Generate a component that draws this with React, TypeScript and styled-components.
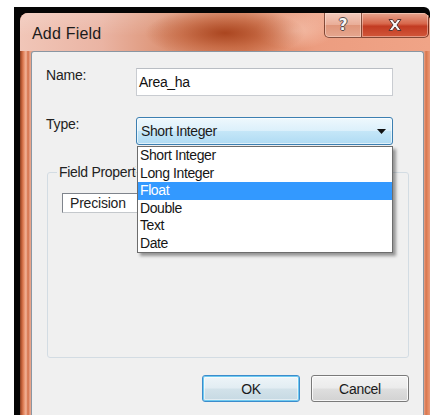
import React from "react";
import styled, { createGlobalStyle } from "styled-components";

const Global = createGlobalStyle`
  html, body { margin: 0; padding: 0; background: #ffffff; }
  body { font-family: "Liberation Sans", Arial, sans-serif; color: #1e1e1e; }
  * { box-sizing: border-box; }
`;

const Page = styled.div`
  width: 432px;
  height: 415px;
  overflow: hidden;
  background: #ffffff;
  padding: 7px 3px 0 14px;
  display: flex;
`;

const Backdrop = styled.div`
  flex: 1;
  display: flex;
  background: #050505;
  padding: 6px 0 0 6px;
  border-radius: 0 6px 0 0;
`;

const Window = styled.div`
  flex: 1;
  display: flex;
  flex-direction: column;
  border-radius: 8px 8px 0 0;
  overflow: hidden;
  background: linear-gradient(
    90deg,
    #8a3f22 0px,
    #c9643c 2px,
    #e88e68 4px,
    #f2b49a 6px,
    #d36e47 8px,
    #e9a48a 10px,
    #e9a48a calc(100% - 6px),
    #d8744c calc(100% - 4px),
    #e48a62 calc(100% - 2px),
    #e9977a 100%
  );
`;

const TitleBar = styled.div`
  height: 38px;
  display: flex;
  align-items: flex-start;
  padding-left: 12px;
  background:
    radial-gradient(ellipse 80px 26px at 205px 20px, rgba(168, 66, 28, 0.95), rgba(186, 86, 46, 0.55) 55%, rgba(214, 120, 86, 0) 100%),
    radial-gradient(ellipse 40px 18px at 275px 18px, rgba(246, 196, 176, 0.8), rgba(246, 196, 176, 0) 100%),
    linear-gradient(180deg, rgba(255, 255, 255, 0.18), rgba(255, 255, 255, 0) 60%),
    linear-gradient(90deg, #f1c6b8 0%, #eab4a3 20%, #dc9274 36%, #d7825e 55%, #ec9d80 72%, #f0a487 100%);
`;

const Title = styled.div`
  margin-top: 12px;
  font-size: 16px;
  line-height: 18px;
  color: #1b1b1b;
  letter-spacing: 0.2px;
`;

const CaptionButtons = styled.div`
  margin-left: auto;
  margin-right: 1px;
  display: flex;
`;

const CaptionButton = styled.div<{ $variant: "help" | "close" }>`
  height: 25px;
  width: ${(p) => (p.$variant === "help" ? 38 : 67)}px;
  display: flex;
  align-items: center;
  justify-content: center;
  border: 1px solid rgba(96, 40, 24, 0.75);
  border-top: none;
  border-left-width: ${(p) => (p.$variant === "help" ? 1 : 0)}px;
  border-radius: ${(p) => (p.$variant === "help" ? "0 0 0 5px" : "0 0 5px 0")};
  box-shadow: inset 0 0 0 1px rgba(255, 230, 220, 0.45);
  background: ${(p) =>
    p.$variant === "help"
      ? "linear-gradient(180deg, #f3cbbd 0%, #e9ad97 50%, #df967b 52%, #e6a78f 100%)"
      : "linear-gradient(180deg, #e8a58e 0%, #d7664a 45%, #c23b22 55%, #d2573a 100%)"};
`;

const HelpGlyph = styled.span`
  font-family: "DejaVu Sans", sans-serif;
  font-weight: bold;
  font-size: 15px;
  color: #f4f6f8;
  text-shadow: -1px 0 #5a4a48, 1px 0 #5a4a48, 0 -1px #5a4a48, 0 1px #5a4a48;
`;

const Client = styled.div`
  flex: 1;
  position: relative;
  display: flex;
  flex-direction: column;
  margin: 0 6px 0 11px;
  padding: 16px 14px 0 14px;
  background: #f0f0f0;
  border: 1px solid #8a96a2;
  border-bottom: none;
  border-radius: 3px 3px 0 0;
`;

const FormRow = styled.div<{ $gap?: number }>`
  display: flex;
  align-items: flex-start;
  height: 28px;
  margin-top: ${(p) => p.$gap ?? 0}px;
`;

const Label = styled.div`
  width: 90px;
  font-size: 14px;
  line-height: 16px;
  letter-spacing: -0.2px;
  color: #222;
  margin-top: -1px;
`;

const TextBox = styled.div`
  width: 257px;
  height: 28px;
  display: flex;
  align-items: center;
  padding-left: 2px;
  background: #ffffff;
  border: 1px solid #c9ccd1;
  border-top-color: #b9bdc3;
  font-size: 14px;
  letter-spacing: -0.3px;
  color: #111;
`;

const SelectWrap = styled.div`
  position: relative;
  width: 257px;
  height: 28px;
`;

const Select = styled.div`
  height: 28px;
  display: flex;
  align-items: center;
  justify-content: space-between;
  padding: 0 6px 0 4px;
  border: 1px solid #3c7fb1;
  border-radius: 3px;
  box-shadow: inset 0 0 0 1px rgba(255, 255, 255, 0.6);
  background: linear-gradient(180deg, #eef8fd 0%, #dcf0fb 48%, #c4e6f8 52%, #b0dbf3 100%);
  font-size: 14px;
  letter-spacing: -0.4px;
  color: #1a1a1a;
`;

const DropList = styled.div`
  position: absolute;
  left: 1px;
  top: calc(100% + 1px);
  width: 256px;
  z-index: 5;
  padding: 0;
  background: #ffffff;
  border: 1px solid #6d6d6d;
  box-shadow: 3px 3px 3px rgba(0, 0, 0, 0.38);
`;

const Option = styled.div<{ $active?: boolean }>`
  height: 17.5px;
  line-height: 17.5px;
  padding-left: 2px;
  font-size: 14px;
  letter-spacing: -0.4px;
  color: ${(p) => (p.$active ? "#ffffff" : "#161616")};
  background: ${(p) => (p.$active ? "#3399ff" : "transparent")};
`;

const GroupBox = styled.fieldset`
  margin: 19px 0 0 1px;
  width: 362px;
  height: 194px;
  padding: 13px 14px 0 14px;
  border: 1px solid #d3dce3;
  border-radius: 3px;
  min-width: 0;
`;

/* the open type list hangs over the end of this caption */
const GroupCaption = styled.legend`
  margin-left: -5px;
  padding: 0 0 0 2px;
  max-width: 79px;
  overflow: hidden;
  white-space: nowrap;
  font-size: 14px;
  line-height: 16px;
  letter-spacing: -0.3px;
  color: #222;
`;

const PropertyCell = styled.div`
  width: 240px;
  height: 20px;
  display: flex;
  align-items: center;
  padding-left: 7px;
  background: #ffffff;
  border: 1px solid #7f848c;
  border-right-color: #c4c8cc;
  border-bottom-color: #c4c8cc;
  font-size: 14px;
  letter-spacing: -0.2px;
  color: #222;
`;

const ButtonRow = styled.div`
  display: flex;
  justify-content: flex-end;
  gap: 11px;
  margin-top: 17px;
`;

const DialogButton = styled.div<{ $default?: boolean }>`
  width: 98px;
  height: 27px;
  display: flex;
  align-items: center;
  justify-content: center;
  border-radius: 3px;
  font-size: 14px;
  letter-spacing: -0.3px;
  color: #1a1a1a;
  border: 1px solid ${(p) => (p.$default ? "#3c8ccc" : "#7a7a7a")};
  box-shadow: ${(p) =>
    p.$default
      ? "inset 0 0 0 1px #6fcaf0, inset 0 0 0 2px rgba(255,255,255,0.5)"
      : "inset 0 0 0 1px rgba(255,255,255,0.8)"};
  background: ${(p) =>
    p.$default
      ? "linear-gradient(180deg, #eef5f9 0%, #e2edf3 48%, #d2e2ea 52%, #c6d9e3 100%)"
      : "linear-gradient(180deg, #f3f3f3 0%, #ebebeb 48%, #dedede 52%, #d2d2d2 100%)"};
`;

const CloseIcon = () => (
  <svg width="18" height="14" viewBox="0 0 18 14">
    <path
      d="M3 1.5 L6.5 1.5 L9 5 L11.5 1.5 L15 1.5 L11 7 L15 12.5 L11.5 12.5 L9 9 L6.5 12.5 L3 12.5 L7 7 Z"
      fill="#f6f6f6"
      stroke="#5a3530"
      strokeWidth="1"
      strokeLinejoin="round"
    />
  </svg>
);

const ArrowDown = () => (
  <svg width="9" height="5" viewBox="0 0 9 5">
    <path d="M0 0 L9 0 L4.5 5 Z" fill="#111" />
  </svg>
);

const fieldTypes = ["Short Integer", "Long Integer", "Float", "Double", "Text", "Date"];

export default function App() {
  return (
    <Page>
      <Global />
      <Backdrop>
        <Window>
          <TitleBar>
            <Title>Add Field</Title>
            <CaptionButtons>
              <CaptionButton $variant="help">
                <HelpGlyph>?</HelpGlyph>
              </CaptionButton>
              <CaptionButton $variant="close">
                <CloseIcon />
              </CaptionButton>
            </CaptionButtons>
          </TitleBar>
          <Client>
            <FormRow>
              <Label>Name:</Label>
              <TextBox>Area_ha</TextBox>
            </FormRow>
            <FormRow $gap={21}>
              <Label>Type:</Label>
              <SelectWrap>
                <Select>
                  <span>Short Integer</span>
                  <ArrowDown />
                </Select>
                <DropList>
                  {fieldTypes.map((t) => (
                    <Option key={t} $active={t === "Float"}>
                      {t}
                    </Option>
                  ))}
                </DropList>
              </SelectWrap>
            </FormRow>
            <GroupBox>
              <GroupCaption>Field Properties</GroupCaption>
              <PropertyCell>Precision</PropertyCell>
            </GroupBox>
            <ButtonRow>
              <DialogButton $default>OK</DialogButton>
              <DialogButton>Cancel</DialogButton>
            </ButtonRow>
          </Client>
        </Window>
      </Backdrop>
    </Page>
  );
}
